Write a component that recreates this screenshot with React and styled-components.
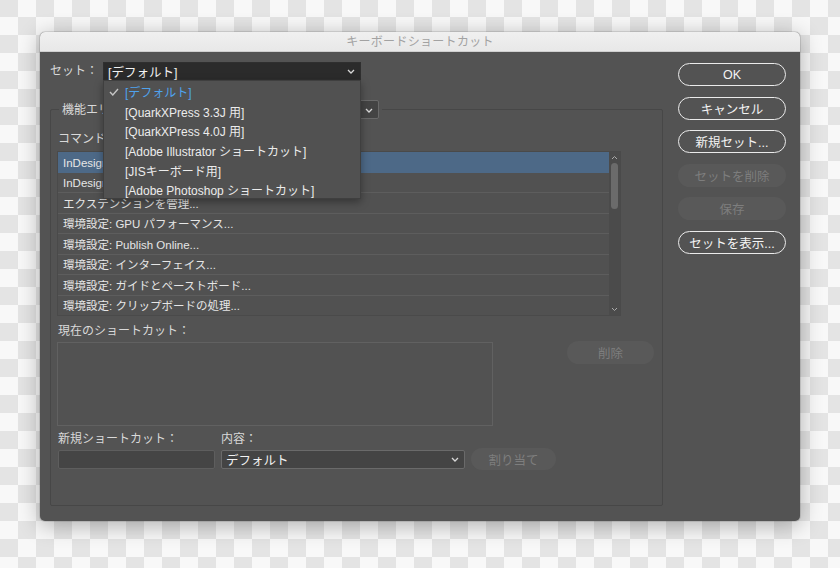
import React from "react";
import styled, { createGlobalStyle, css } from "styled-components";

const Global = createGlobalStyle`
  html, body { margin: 0; padding: 0; }
  body {
    width: 840px; height: 568px; overflow: hidden;
    background-color: #f8f8f8;
    background-image:
      linear-gradient(45deg, #e4e4e4 25%, transparent 25%, transparent 75%, #e4e4e4 75%),
      linear-gradient(45deg, #e4e4e4 25%, transparent 25%, transparent 75%, #e4e4e4 75%);
    background-size: 36px 36px;
    background-position: 18px -1px, 0 17px;
    font-family: "Liberation Sans", "Noto Sans CJK JP", sans-serif;
    font-size: 12px;
  }
`;

const Page = styled.div`
  padding: 32px 0 0 40px;
  height: 568px;
  box-sizing: border-box;
`;

const Dialog = styled.div`
  width: 760px;
  height: 489px;
  background: #535353;
  border-radius: 5px;
  box-shadow: 0 4px 22px rgba(0, 0, 0, 0.3), 0 0 0 1px rgba(0, 0, 0, 0.1);
  display: flex;
  flex-direction: column;
`;

const TitleBar = styled.div`
  height: 20px;
  box-sizing: border-box;
  background: linear-gradient(#f0f0f0, #e8e8e8);
  border-bottom: 1px solid #cfcfcf;
  border-radius: 5px 5px 0 0;
  text-align: center;
  line-height: 20px;
  font-size: 12px;
  color: #a2a2a2;
  letter-spacing: 0.3px;
`;

const Body = styled.div`
  flex: 1;
  display: grid;
  grid-template-columns: 613px 108px;
  column-gap: 15px;
  padding: 10px 14px 15px 10px;
  min-height: 0;
`;

const LeftCol = styled.div`
  display: flex;
  flex-direction: column;
  min-height: 0;
`;

const SetRow = styled.div`
  display: flex;
  align-items: center;
  height: 18px;
  position: relative;
  z-index: 5;
`;

const Label = styled.span`
  color: #d9d9d9;
  font-size: 12px;
  line-height: 16px;
  white-space: nowrap;
  ${(p) => p.$w && css`width: ${p.$w}px;`}
`;

const SelectBox = styled.div`
  position: relative;
  box-sizing: border-box;
  width: ${(p) => p.$w}px;
  height: ${(p) => p.$h || 19}px;
  display: flex;
  align-items: center;
  padding: 0 18px 0 4px;
  color: #f2f2f2;
  font-size: 12.5px;
  ${(p) =>
    p.$dark
      ? css`
          background: #2b2b2b;
          border: 1px solid #2f2f2f;
        `
      : css`
          background: #444444;
          border: 1px solid #6a6a6a;
          border-radius: 2px;
        `}
`;

const Chevron = styled.svg`
  position: absolute;
  right: 5px;
  top: 50%;
  margin-top: -2px;
`;

const Chev = () => (
  <Chevron width="8" height="5" viewBox="0 0 8 5">
    <polyline points="1,1 4,4 7,1" fill="none" stroke="#d8d8d8" strokeWidth="1.3" />
  </Chevron>
);

const Menu = styled.div`
  position: absolute;
  top: 17px;
  left: -1px;
  width: 258px;
  height: 119px;
  box-sizing: border-box;
  background: #515151;
  border: 1px solid #3f3f3f;
  box-shadow: 0 3px 8px rgba(0, 0, 0, 0.35);
  padding-top: 1px;
`;

const MenuItem = styled.div`
  position: relative;
  height: 19.6px;
  display: flex;
  align-items: center;
  padding-left: 21px;
  font-size: 12px;
  color: ${(p) => (p.$active ? "#4fa3ee" : "#ececec")};
  white-space: nowrap;
`;

const Check = styled.svg`
  position: absolute;
  left: 5px;
  top: 6px;
`;

const Group = styled.fieldset`
  flex: 1;
  margin: 20px 0 0;
  padding: 0 6px;
  border: 1px solid #474747;
  border-radius: 2px;
  min-width: 0;
`;

const Legend = styled.legend`
  margin-left: 2px;
  padding: 0 3px;
  height: 19px;
  display: flex;
  align-items: center;
  gap: 5px;
`;

const GroupInner = styled.div`
  display: flex;
  flex-direction: column;
`;

const SectionLabel = styled(Label)`
  margin-top: ${(p) => p.$mt}px;
  margin-bottom: ${(p) => p.$mb}px;
  padding-left: 1px;
`;

const List = styled.div`
  display: flex;
  width: 564px;
  height: 165px;
  box-sizing: border-box;
  border: 1px solid #4a4a4a;
  background: #515151;
`;

const Rows = styled.div`
  flex: 1;
  overflow: hidden;
`;

const Row = styled.div`
  height: 20.5px;
  box-sizing: border-box;
  border-bottom: 1px solid #5d5d5d;
  padding-left: 5px;
  display: flex;
  align-items: center;
  color: #e6e6e6;
  font-size: 11.5px;
  white-space: nowrap;
  background: ${(p) => (p.$sel ? "#4d6987" : "transparent")};
  ${(p) => p.$sel && css`border-bottom-color: #4d6987;`}
`;

const ScrollBar = styled.div`
  position: relative;
  width: 11px;
  background: #4b4b4b;
`;

const Thumb = styled.div`
  position: absolute;
  left: 2px;
  right: 2px;
  top: 11px;
  height: 46px;
  border-radius: 4px;
  background: #6b6b6b;
`;

const Arrow = styled.svg`
  position: absolute;
  left: 2px;
  ${(p) => (p.$up ? "top: 3px;" : "bottom: 3px;")}
`;

const ShortcutRow = styled.div`
  display: flex;
  align-items: flex-start;
`;

const Box = styled.div`
  width: 436px;
  height: 84px;
  box-sizing: border-box;
  border: 1px solid #616161;
  background: #525252;
`;

const Button = styled.div`
  box-sizing: border-box;
  width: ${(p) => p.$w || 108}px;
  height: ${(p) => p.$h || 23}px;
  border-radius: 12px;
  display: flex;
  align-items: center;
  justify-content: center;
  font-size: 12.5px;
  white-space: nowrap;
  ${(p) =>
    p.$disabled
      ? css`
          background: #595959;
          color: #7e7e7e;
        `
      : css`
          border: 1.5px solid #ebebeb;
          color: #f4f4f4;
        `}
  ${(p) => p.$ml && css`margin-left: ${p.$ml}px;`}
  ${(p) => p.$mt && css`margin-top: ${p.$mt}px;`}
`;

const BottomGrid = styled.div`
  display: grid;
  grid-template-columns: 157px 244px auto;
  column-gap: 6px;
  row-gap: 1px;
  align-items: center;
  margin-top: 5px;
  padding-left: 1px;
`;

const Input = styled.div`
  height: 19px;
  box-sizing: border-box;
  border: 1px solid #5e5e5e;
  border-radius: 2px;
  background: #454545;
`;

const RightCol = styled.div`
  display: flex;
  flex-direction: column;
  gap: 10.6px;
  padding-top: 1px;
`;

const rows = [
  "InDesign ヘルプ...",
  "InDesign オンライン...",
  "エクステンションを管理...",
  "環境設定: GPU パフォーマンス...",
  "環境設定: Publish Online...",
  "環境設定: インターフェイス...",
  "環境設定: ガイドとペーストボード...",
  "環境設定: クリップボードの処理...",
];

const menuItems = [
  "[デフォルト]",
  "[QuarkXPress 3.3J 用]",
  "[QuarkXPress 4.0J 用]",
  "[Adobe Illustrator ショートカット]",
  "[JISキーボード用]",
  "[Adobe Photoshop ショートカット]",
];

export default function App() {
  return (
    <Page>
      <Global />
      <Dialog>
        <TitleBar>キーボードショートカット</TitleBar>
        <Body>
          <LeftCol>
            <SetRow>
              <Label $w={53}>セット：</Label>
              <SelectBox $w={258} $h={18} $dark>
                [デフォルト]
                <Chev />
                <Menu>
                  {menuItems.map((m, i) => (
                    <MenuItem key={m} $active={i === 0}>
                      {i === 0 && (
                        <Check width="10" height="8" viewBox="0 0 10 8">
                          <polyline points="1,4 3.8,7 9,1" fill="none" stroke="#c4c4c4" strokeWidth="1.4" />
                        </Check>
                      )}
                      {m}
                    </MenuItem>
                  ))}
                </Menu>
              </SelectBox>
            </SetRow>
            <Group>
              <Legend>
                <Label $w={72}>機能エリア：</Label>
                <SelectBox $w={240}>
                  アプリケーションメニュー
                  <Chev />
                </SelectBox>
              </Legend>
              <GroupInner>
                <SectionLabel $mt={12} $mb={4}>コマンド：</SectionLabel>
                <List>
                  <Rows>
                    {rows.map((r, i) => (
                      <Row key={r} $sel={i === 0}>
                        {r}
                      </Row>
                    ))}
                  </Rows>
                  <ScrollBar>
                    <Arrow $up width="7" height="5" viewBox="0 0 7 5">
                      <polyline points="1,4 3.5,1.5 6,4" fill="none" stroke="#aaa" strokeWidth="1" />
                    </Arrow>
                    <Thumb />
                    <Arrow width="7" height="5" viewBox="0 0 7 5">
                      <polyline points="1,1 3.5,3.5 6,1" fill="none" stroke="#aaa" strokeWidth="1" />
                    </Arrow>
                  </ScrollBar>
                </List>
                <SectionLabel $mt={7} $mb={3}>現在のショートカット：</SectionLabel>
                <ShortcutRow>
                  <Box />
                  <Button $disabled $w={87} $ml={74} $mt={-1}>
                    削除
                  </Button>
                </ShortcutRow>
                <BottomGrid>
                  <Label>新規ショートカット：</Label>
                  <Label>内容：</Label>
                  <span />
                  <Input />
                  <SelectBox $w={244}>
                    デフォルト
                    <Chev />
                  </SelectBox>
                  <Button $disabled $w={85} $h={22}>
                    割り当て
                  </Button>
                </BottomGrid>
              </GroupInner>
            </Group>
          </LeftCol>
          <RightCol>
            <Button>OK</Button>
            <Button>キャンセル</Button>
            <Button>新規セット...</Button>
            <Button $disabled>セットを削除</Button>
            <Button $disabled>保存</Button>
            <Button>セットを表示...</Button>
          </RightCol>
        </Body>
      </Dialog>
    </Page>
  );
}
